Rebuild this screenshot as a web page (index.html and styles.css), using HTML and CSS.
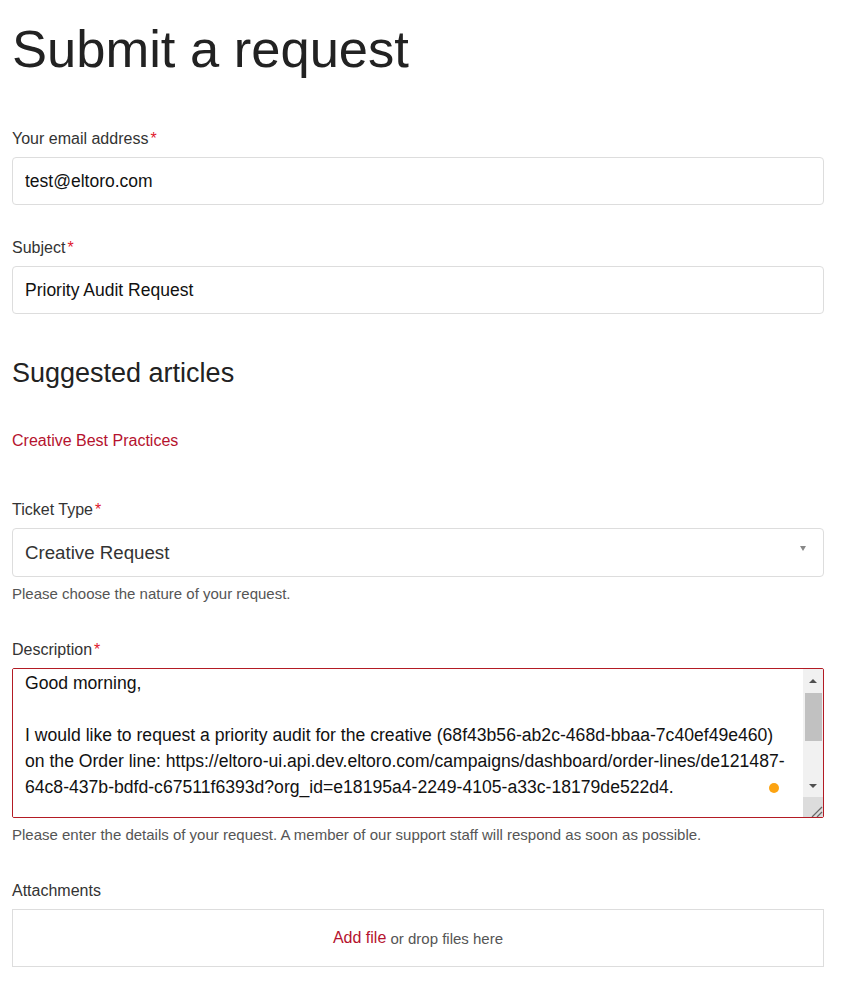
FILE: index.html
```html
<!DOCTYPE html>
<html lang="en">
	<head>
		<meta charset="UTF-8" />
		<meta name="viewport" content="width=device-width, initial-scale=1.0" />
		<title>Submit a request</title>
		<link rel="stylesheet" href="styles.css">
	</head>
	<body>
		<div class="page">
			<h1 class="title">Submit a request</h1>
			<form class="form">
				<div class="field field-tight">
					<label class="label" for="email">Your email address<span class="req">*</span></label>
					<input class="input" id="email" type="email" value="test@eltoro.com" />
				</div>
				<div class="field">
					<label class="label" for="subject">Subject<span class="req">*</span></label>
					<input class="input" id="subject" type="text" value="Priority Audit Request" />
				</div>

				<h2 class="subtitle">Suggested articles</h2>
				<ul class="articles">
					<li><a href="#">Creative Best Practices</a></li>
				</ul>

				<div class="field">
					<label class="label" for="type">Ticket Type<span class="req">*</span></label>
					<div class="select">
						<select id="type">
							<option>Creative Request</option>
						</select>
					</div>
					<p class="hint">Please choose the nature of your request.</p>
				</div>

				<div class="field">
					<label class="label" for="desc">Description<span class="req">*</span></label>
					<div class="editor">
						<textarea id="desc">Good morning,

I would like to request a priority audit for the creative (68f43b56-ab2c-468d-bbaa-7c40ef49e460)
on the Order line: https://eltoro-ui.api.dev.eltoro.com/campaigns/dashboard/order-lines/de121487-
64c8-437b-bdfd-c67511f6393d?org_id=e18195a4-2249-4105-a33c-18179de522d4.

Thank you!</textarea>
						<div class="scrollbar">
							<span class="btn"><i class="arrow up"></i></span>
							<span class="track"><span class="thumb"></span></span>
							<span class="btn"><i class="arrow down"></i></span>
							<span class="corner">
								<svg width="20" height="20" viewBox="0 0 20 20">
									<line x1="9" y1="20" x2="19" y2="10" stroke="#666" stroke-width="1.2" />
									<line x1="14" y1="20" x2="19" y2="15" stroke="#666" stroke-width="1.2" />
								</svg>
							</span>
						</div>
						<span class="dot"></span>
					</div>
					<p class="hint">Please enter the details of your request. A member of our support staff will respond as soon as possible.</p>
				</div>

				<div class="field">
					<label class="label">Attachments</label>
					<div class="dropzone">
						<a href="#">Add file</a>&nbsp;or drop files here
					</div>
				</div>
			</form>
		</div>
	</body>
</html>
```

FILE: styles.css
```css
* {
	margin: 0;
	padding: 0;
	box-sizing: border-box;
}
body {
	font-family: "Liberation Sans", Arial, sans-serif;
	color: #333;
	background: #fff;
}
.page {
	padding: 18px 38px 0 12px;
}
.title {
	font-size: 52.5px;
	line-height: 62px;
	font-weight: normal;
	color: #222;
	margin-bottom: 49px;
}
.field {
	margin-bottom: 37px;
}
.field-tight {
	margin-bottom: 33px;
}
.label {
	display: block;
	font-size: 16px;
	line-height: 20px;
	color: #333;
	margin-bottom: 8px;
}
.req {
	color: #e0182d;
	margin-left: 2px;
}
.input {
	display: block;
	width: 100%;
	height: 48px;
	padding: 0 12px;
	border: 1px solid #ddd;
	border-radius: 4px;
	font-family: inherit;
	font-size: 17.5px;
	color: #111;
	outline: none;
}
.subtitle {
	font-size: 27px;
	line-height: 32px;
	font-weight: normal;
	color: #222;
	padding-top: 6px;
	margin-bottom: 42px;
}
.articles {
	list-style: none;
	margin-bottom: 49px;
}
.articles a {
	font-size: 16px;
	line-height: 20px;
	color: #b5122e;
	text-decoration: none;
}
.select {
	position: relative;
}
.select select {
	display: block;
	width: 100%;
	height: 49px;
	padding: 0 12px;
	border: 1px solid #ddd;
	border-radius: 4px;
	background: #fff;
	font-family: inherit;
	font-size: 18.7px;
	color: #333;
	appearance: none;
	-webkit-appearance: none;
	outline: none;
}
.select::after {
	content: "";
	position: absolute;
	right: 18px;
	top: 18px;
	border-left: 3.5px solid transparent;
	border-right: 3.5px solid transparent;
	border-top: 5px solid #888;
}
.hint {
	font-size: 15px;
	line-height: 18px;
	color: #555;
	margin-top: 8px;
}
.editor {
	position: relative;
	display: flex;
	height: 150px;
	border: 1px solid #b31b24;
	border-radius: 2px;
	overflow: hidden;
}
.editor textarea {
	flex: 1;
	border: 0;
	padding: 1px 4px 0 12px;
	font-family: inherit;
	font-size: 17.6px;
	line-height: 26px;
	color: #111;
	resize: none;
	outline: none;
	overflow: hidden;
	white-space: pre;
}
.scrollbar {
	width: 20px;
	display: flex;
	flex-direction: column;
	background: #f1f1f1;
}
.scrollbar .btn {
	height: 23px;
	display: flex;
	align-items: center;
	justify-content: center;
}
.arrow {
	width: 0;
	height: 0;
	border-left: 4px solid transparent;
	border-right: 4px solid transparent;
}
.arrow.up {
	border-bottom: 4px solid #505050;
}
.arrow.down {
	border-top: 4px solid #505050;
}
.scrollbar .track {
	flex: 1;
	padding: 1px 1px 0 2px;
}
.scrollbar .thumb {
	display: block;
	height: 48px;
	background: #c1c1c1;
}
.scrollbar .corner {
	height: 20px;
	background: #dcdcdc;
}
.scrollbar .corner svg {
	display: block;
}
.dot {
	position: absolute;
	left: 756px;
	top: 114px;
	width: 10px;
	height: 10px;
	border-radius: 50%;
	background: #fca311;
}
.dropzone {
	display: flex;
	align-items: center;
	justify-content: center;
	height: 58px;
	border: 1px solid #ddd;
	font-size: 15px;
	color: #555;
}
.dropzone a {
	font-size: 16px;
	color: #b5122e;
	text-decoration: none;
}
```
